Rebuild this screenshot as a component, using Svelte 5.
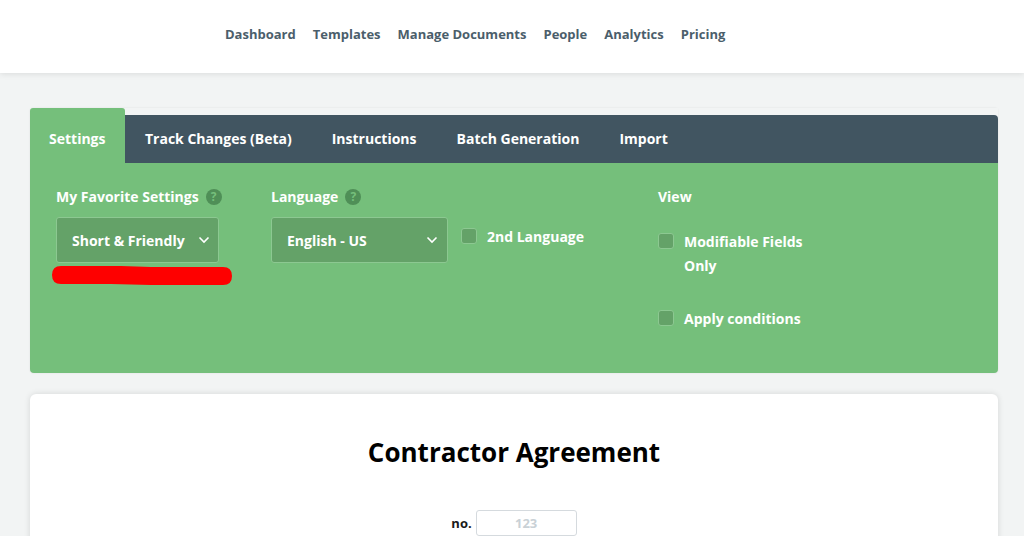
<script>
  const nav = ["Dashboard", "Templates", "Manage Documents", "People", "Analytics", "Pricing"];
  const tabs = ["Track Changes (Beta)", "Instructions", "Batch Generation", "Import"];
</script>

<header>
  <nav>
    {#each nav as item}
      <span>{item}</span>
    {/each}
  </nav>
</header>

<main>
  <section class="panel">
    <div class="tabs">
      <div class="tab active">Settings</div>
      <div class="bar">
        {#each tabs as t}
          <div class="tab">{t}</div>
        {/each}
      </div>
    </div>
    <div class="settings">
      <div class="col fav">
        <div class="label">My Favorite Settings <span class="help">?</span></div>
        <div class="select">
          <span>Short &amp; Friendly</span>
          <svg width="12" height="8" viewBox="0 0 12 8"><path d="M1.5 1.5 6 6l4.5-4.5" fill="none" stroke="#fff" stroke-width="1.6" /></svg>
        </div>
        <svg class="scribble" width="182" height="21" viewBox="0 0 182 21"><path d="M10 1 L70 1 L100 2 L172 2 Q181 2 181 11 Q181 20 172 20 L100 20 L60 19 L10 19 Q1 19 1 10 Q1 1 10 1Z" fill="#fe0000" /></svg>
      </div>
      <div class="col lang">
        <div class="label">Language <span class="help">?</span></div>
        <div class="lang-row">
          <div class="select wide">
            <span>English - US</span>
            <svg width="12" height="8" viewBox="0 0 12 8"><path d="M1.5 1.5 6 6l4.5-4.5" fill="none" stroke="#fff" stroke-width="1.6" /></svg>
          </div>
          <div class="check second"><i></i><span>2nd Language</span></div>
        </div>
      </div>
      <div class="col view">
        <div class="label">View</div>
        <div class="check modifiable"><i></i><span>Modifiable Fields Only</span></div>
        <div class="check apply"><i></i><span>Apply conditions</span></div>
      </div>
    </div>
  </section>

  <section class="card">
    <h1>Contractor Agreement</h1>
    <div class="no">
      <b>no.</b>
      <div class="input">123</div>
    </div>
  </section>
</main>

<style>
  :global(body) {
    background: #f2f4f4;
    font-family: "Open Sans", sans-serif;
    overflow: hidden;
    height: 536px;
  }
  header {
    height: 73px;
    background: #fff;
    box-shadow: 0 1px 6px rgba(0, 0, 0, 0.1);
    padding-left: 225px;
    box-sizing: border-box;
  }
  nav {
    display: flex;
    gap: 17px;
    padding-top: 25px;
    font-size: 13px;
    font-weight: 700;
    line-height: 18px;
    color: #4b5e6b;
  }
  main {
    padding: 35px 26px 0 30px;
  }
  .panel {
    border-radius: 4px;
    background: #75bf7b;
    height: 265px;
    box-shadow: 0 0 2px rgba(0, 0, 0, 0.1);
  }
  .tabs {
    display: flex;
    height: 55px;
    background: #f2f4f4;
    font-size: 14px;
    font-weight: 700;
    color: #fff;
  }
  .tab {
    padding: 0 20px;
    line-height: 48px;
    white-space: nowrap;
  }
  .tab.active {
    width: 95px;
    box-sizing: border-box;
    padding: 0 0 0 19px;
    background: #75bf7b;
    border-radius: 3px 3px 0 0;
    line-height: 62px;
  }
  .bar {
    flex: 1;
    display: flex;
    height: 48px;
    margin-top: 7px;
    background: #415561;
    border-radius: 0 4px 0 0;
  }
  .settings {
    display: flex;
    padding: 24px 0 0 26px;
    color: #fff;
    font-size: 14px;
    font-weight: 700;
  }
  .col {
    position: relative;
  }
  .fav {
    width: 215px;
  }
  .lang {
    width: 387px;
  }
  .label {
    display: flex;
    align-items: center;
    gap: 7px;
    height: 19px;
    line-height: 19px;
  }
  .help {
    width: 16px;
    height: 16px;
    border-radius: 50%;
    background: #4f8f57;
    color: #75bf7b;
    font-size: 12px;
    line-height: 16px;
    text-align: center;
  }
  .select {
    display: flex;
    align-items: center;
    justify-content: space-between;
    box-sizing: border-box;
    width: 163px;
    height: 46px;
    margin-top: 11px;
    padding: 0 8px 0 15px;
    background: #64a268;
    border: 1px solid #8cc891;
    border-radius: 3px;
  }
  .select.wide {
    width: 177px;
    padding-right: 9px;
  }
  .scribble {
    position: absolute;
    left: -5px;
    top: 78px;
  }
  .lang-row {
    display: flex;
  }
  .check {
    display: flex;
    align-items: flex-start;
    gap: 10px;
    line-height: 24px;
  }
  .check i {
    flex: none;
    width: 16px;
    height: 16px;
    margin-top: 3px;
    box-sizing: border-box;
    background: #64a268;
    border: 1px solid #8cc891;
    border-radius: 3px;
  }
  .second {
    margin: 19px 0 0 13px;
  }
  .view {
    width: 165px;
  }
  .modifiable {
    margin-top: 24px;
  }
  .apply {
    margin-top: 29px;
  }
  .card {
    margin-top: 21px;
    height: 200px;
    background: #fff;
    border-radius: 6px;
    box-shadow: 0 0 6px rgba(0, 0, 0, 0.12);
    text-align: center;
  }
  h1 {
    margin: 0;
    padding-top: 38px;
    padding-right: 0;
    font-size: 26px;
    font-weight: 700;
    line-height: 40px;
    color: #000;
  }
  .no {
    display: flex;
    justify-content: center;
    align-items: center;
    gap: 4px;
    margin-top: 38px;
    font-size: 13px;
    color: #1a1a1a;
  }
  .input {
    box-sizing: border-box;
    width: 101px;
    height: 26px;
    border: 1px solid #d5dade;
    border-radius: 3px;
    color: #c9d1d6;
    font-weight: 700;
    line-height: 24px;
    text-align: center;
  }
</style>
